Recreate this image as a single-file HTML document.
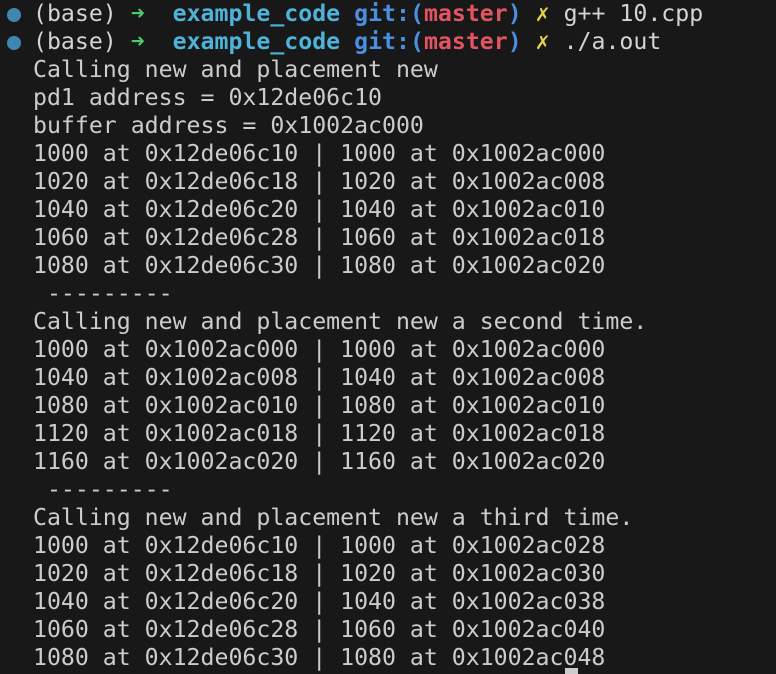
<!DOCTYPE html>
<html><head><meta charset="utf-8"><style>
html,body{margin:0;padding:0;background:#181818;width:776px;height:674px;overflow:hidden}
pre{position:absolute;left:33px;top:0;margin:0;font-family:"DejaVu Sans Mono","Liberation Mono",monospace;font-size:23.2px;line-height:28px;color:#cccccc;white-space:pre}
.p{color:#d4d4d4}
.g{color:#4ec96e;font-weight:bold}
.c{color:#4fb3d9;font-weight:bold}
.b{color:#4a8fe0;font-weight:bold}
.r{color:#e05561;font-weight:bold}
.y{color:#e5d14a;font-weight:bold}
.dot{position:absolute;left:7px;width:14px;height:14px;border-radius:50%;background:#3f86b0}
.cur{position:absolute;left:565px;top:668px;width:13px;height:6px;background:#cccccc}
</style></head><body>
<div class="dot" style="top:8px"></div>
<div class="dot" style="top:36px"></div>
<pre><span class="p">(base)</span> <span class="g">➜</span>  <span class="c">example_code</span> <span class="b">git:(</span><span class="r">master</span><span class="b">)</span> <span class="y">✗</span> <span class="p">g++ 10.cpp</span>
<span class="p">(base)</span> <span class="g">➜</span>  <span class="c">example_code</span> <span class="b">git:(</span><span class="r">master</span><span class="b">)</span> <span class="y">✗</span> <span class="p">./a.out</span>
Calling new and placement new
pd1 address = 0x12de06c10
buffer address = 0x1002ac000
1000 at 0x12de06c10 | 1000 at 0x1002ac000
1020 at 0x12de06c18 | 1020 at 0x1002ac008
1040 at 0x12de06c20 | 1040 at 0x1002ac010
1060 at 0x12de06c28 | 1060 at 0x1002ac018
1080 at 0x12de06c30 | 1080 at 0x1002ac020
 ---------
Calling new and placement new a second time.
1000 at 0x1002ac000 | 1000 at 0x1002ac000
1040 at 0x1002ac008 | 1040 at 0x1002ac008
1080 at 0x1002ac010 | 1080 at 0x1002ac010
1120 at 0x1002ac018 | 1120 at 0x1002ac018
1160 at 0x1002ac020 | 1160 at 0x1002ac020
 ---------
Calling new and placement new a third time.
1000 at 0x12de06c10 | 1000 at 0x1002ac028
1020 at 0x12de06c18 | 1020 at 0x1002ac030
1040 at 0x12de06c20 | 1040 at 0x1002ac038
1060 at 0x12de06c28 | 1060 at 0x1002ac040
1080 at 0x12de06c30 | 1080 at 0x1002ac048</pre>
<div class="cur"></div>
</body></html>
